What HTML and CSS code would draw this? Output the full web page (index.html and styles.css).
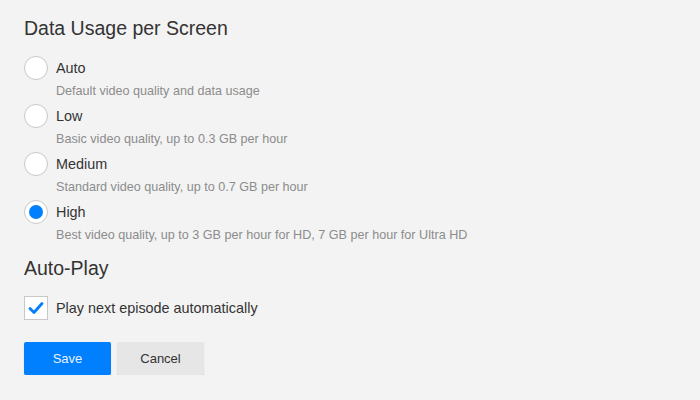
FILE: index.html
```html
<!DOCTYPE html>
<html>
<head>
<meta charset="utf-8">
<link rel="stylesheet" href="styles.css">
</head>
<body>
<div class="page">
  <h2 class="title">Data Usage per Screen</h2>
  <div class="options">
    <div class="option">
      <div class="row"><span class="radio"></span><span class="label">Auto</span></div>
      <div class="desc">Default video quality and data usage</div>
    </div>
    <div class="option">
      <div class="row"><span class="radio"></span><span class="label">Low</span></div>
      <div class="desc">Basic video quality, up to 0.3 GB per hour</div>
    </div>
    <div class="option">
      <div class="row"><span class="radio"></span><span class="label">Medium</span></div>
      <div class="desc">Standard video quality, up to 0.7 GB per hour</div>
    </div>
    <div class="option">
      <div class="row"><span class="radio checked"></span><span class="label">High</span></div>
      <div class="desc">Best video quality, up to 3 GB per hour for HD, 7 GB per hour for Ultra HD</div>
    </div>
  </div>
  <h2 class="title title2">Auto-Play</h2>
  <div class="row check-row">
    <span class="checkbox"><svg width="16" height="14" viewBox="0 0 16 14"><path d="M2 7.5 L6 11.5 L14 2.5" fill="none" stroke="#0080ff" stroke-width="2.8" stroke-linecap="round" stroke-linejoin="round"/></svg></span>
    <span class="label">Play next episode automatically</span>
  </div>
  <div class="buttons">
    <button class="btn save">Save</button>
    <button class="btn cancel">Cancel</button>
  </div>
</div>
</body>
</html>
```
FILE: styles.css
```css
html, body {
  margin: 0;
  padding: 0;
  background: #f3f3f3;
  font-family: "Liberation Sans", Arial, sans-serif;
  color: #333;
}
.page {
  padding: 16px 24px 0 24px;
}
.title {
  font-size: 19.5px;
  font-weight: normal;
  margin: 0;
  line-height: 24px;
  color: #333;
}
.options {
  margin-top: 16px;
  display: flex;
  flex-direction: column;
  gap: 4px;
}
.option {
  display: flex;
  flex-direction: column;
}
.row {
  display: flex;
  align-items: center;
  gap: 8px;
}
.radio {
  width: 22px;
  height: 22px;
  border: 1px solid #c8c8c8;
  border-radius: 50%;
  background: #fff;
  box-sizing: content-box;
  position: relative;
}
.radio.checked::after {
  content: "";
  position: absolute;
  left: 4px;
  top: 4px;
  width: 14px;
  height: 14px;
  border-radius: 50%;
  background: #0080ff;
}
.label {
  font-size: 14.4px;
  color: #333;
}
.desc {
  font-size: 12.6px;
  color: #8c8c8c;
  margin-left: 32px;
  margin-top: 2px;
  line-height: 18px;
}
.title2 {
  margin-top: 12px;
}
.check-row {
  margin-top: 16px;
}
.checkbox {
  width: 22px;
  height: 22px;
  border: 1px solid #c8c8c8;
  background: #fff;
  display: flex;
  align-items: center;
  justify-content: center;
}
.buttons {
  margin-top: 22px;
  display: flex;
  gap: 6px;
}
.btn {
  width: 87px;
  height: 33px;
  border: none;
  border-radius: 2px;
  font-family: "Liberation Sans", Arial, sans-serif;
  font-size: 13px;
  padding: 0;
}
.save {
  background: #0080ff;
  color: #e8f2ff;
  box-shadow: 0 1px 1px rgba(0,0,0,0.25);
}
.cancel {
  background: #e6e6e6;
  color: #333;
  box-shadow: 0 1px 1px rgba(0,0,0,0.2);
}
```
